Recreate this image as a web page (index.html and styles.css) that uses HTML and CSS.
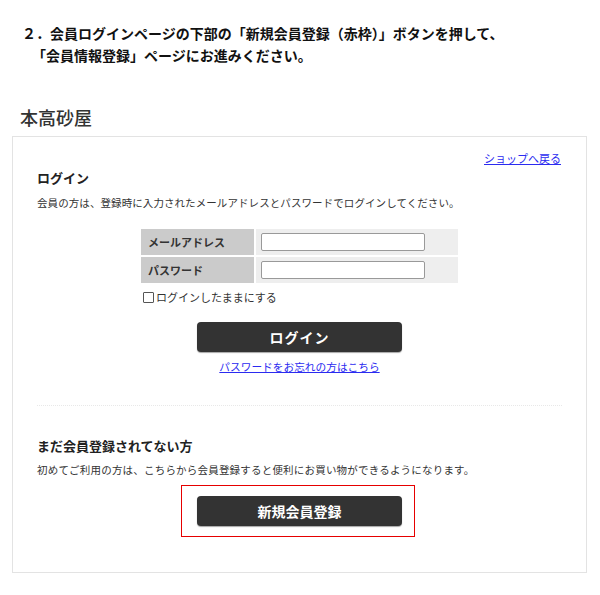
FILE: index.html
```html
<!DOCTYPE html>
<html lang="ja">
<head>
<meta charset="utf-8">
<link rel="stylesheet" href="styles.css">
</head>
<body>
<div class="intro">
  <p class="line1">２．会員ログインページの下部の「新規会員登録（赤枠）」ボタンを押して、</p>
  <p class="line2">「会員情報登録」ページにお進みください。</p>
</div>
<h1 class="shop">本高砂屋</h1>
<div class="card">
  <div class="back"><a href="#">ショップへ戻る</a></div>
  <h2 class="sec-title">ログイン</h2>
  <p class="desc">会員の方は、登録時に入力されたメールアドレスとパスワードでログインしてください。</p>
  <div class="form">
    <div class="grid">
      <div class="label">メールアドレス</div>
      <div class="value"><span class="input"></span></div>
      <div class="label">パスワード</div>
      <div class="value"><span class="input"></span></div>
    </div>
    <div class="keep"><span class="box"></span>ログインしたままにする</div>
  </div>
  <div class="btn login-btn">ログイン</div>
  <div class="forgot"><a href="#">パスワードをお忘れの方はこちら</a></div>
  <div class="sep"></div>
  <h2 class="sec-title sec2">まだ会員登録されてない方</h2>
  <p class="desc desc2">初めてご利用の方は、こちらから会員登録すると便利にお買い物ができるようになります。</p>
  <div class="redbox"><div class="btn reg-btn">新規会員登録</div></div>
</div>
</body>
</html>
```

FILE: styles.css
```css
html, body {
  margin: 0;
  padding: 0;
  background: #fff;
}
body {
  font-family: "Noto Sans CJK JP", "Noto Sans", sans-serif;
  color: #333;
  width: 600px;
}
.intro {
  padding-top: 22px;
}
.intro p {
  margin: 0;
  font-size: 14px;
  line-height: 22px;
  font-weight: bold;
  color: #111;
}
.line1 { padding-left: 22px; }
.line2 { padding-left: 32px; }
.shop {
  margin: 39px 0 0 20px;
  font-size: 18px;
  line-height: 24px;
  font-weight: 500;
  color: #333;
}
.card {
  margin: 7px 0 0 12px;
  width: 525px;
  border: 1px solid #e3e3e3;
  padding: 13px 24px 35px 24px;
}
.back {
  text-align: right;
  font-size: 11px;
  line-height: 16px;
  padding-right: 1px;
}
a {
  color: #2b2bf0;
  text-decoration: underline;
}
.sec-title {
  margin: 3px 0 0 0;
  font-size: 13px;
  line-height: 18px;
  font-weight: bold;
  color: #222;
}
.desc {
  margin: 8px 0 0 0;
  font-size: 10.5px;
  line-height: 16px;
  color: #333;
  letter-spacing: 0.08px;
}
.form {
  width: 317px;
  margin: 18px auto 0 auto;
}
.grid {
  display: grid;
  grid-template-columns: 113px 202px;
  grid-auto-rows: 26px;
  gap: 2px;
}
.label {
  background: #cbcbcb;
  font-size: 11px;
  font-weight: bold;
  color: #333;
  padding-left: 7px;
  display: flex;
  align-items: center;
}
.value {
  background: #eeeeee;
  padding-left: 5px;
  display: flex;
  align-items: center;
}
.input {
  display: block;
  width: 162px;
  height: 16px;
  background: #fff;
  border: 1px solid #999;
  border-radius: 2px;
}
.keep {
  margin-top: 6px;
  font-size: 11px;
  line-height: 16px;
  display: flex;
  align-items: center;
  padding-left: 2px;
  color: #333;
}
.box {
  display: inline-block;
  width: 9px;
  height: 9px;
  border: 1px solid #555;
  border-radius: 1px;
  margin-right: 2px;
}
.btn {
  width: 205px;
  height: 30px;
  background: #333;
  border-radius: 4px;
  color: #fff;
  font-size: 14px;
  font-weight: bold;
  display: flex;
  align-items: center;
  justify-content: center;
  box-shadow: 0 1px 1px rgba(0,0,0,0.35);
  letter-spacing: 1px;
}
.login-btn {
  margin: 17px auto 0 auto;
}
.forgot {
  margin-top: 7px;
  text-align: center;
  font-size: 10.7px;
  line-height: 16px;
}
.sep {
  margin-top: 30px;
  border-top: 1px dotted #e8e8e8;
}
.sec2 {
  margin-top: 31px;
}
.desc2 {
  margin-top: 7px;
  letter-spacing: 0.2px;
}
.redbox {
  margin: 7px 0 0 144px;
  width: 232px;
  border: 1px solid #e60000;
  padding: 10px 0 10px 0;
}
.reg-btn {
  margin-left: 15px;
  letter-spacing: 0;
}
```
